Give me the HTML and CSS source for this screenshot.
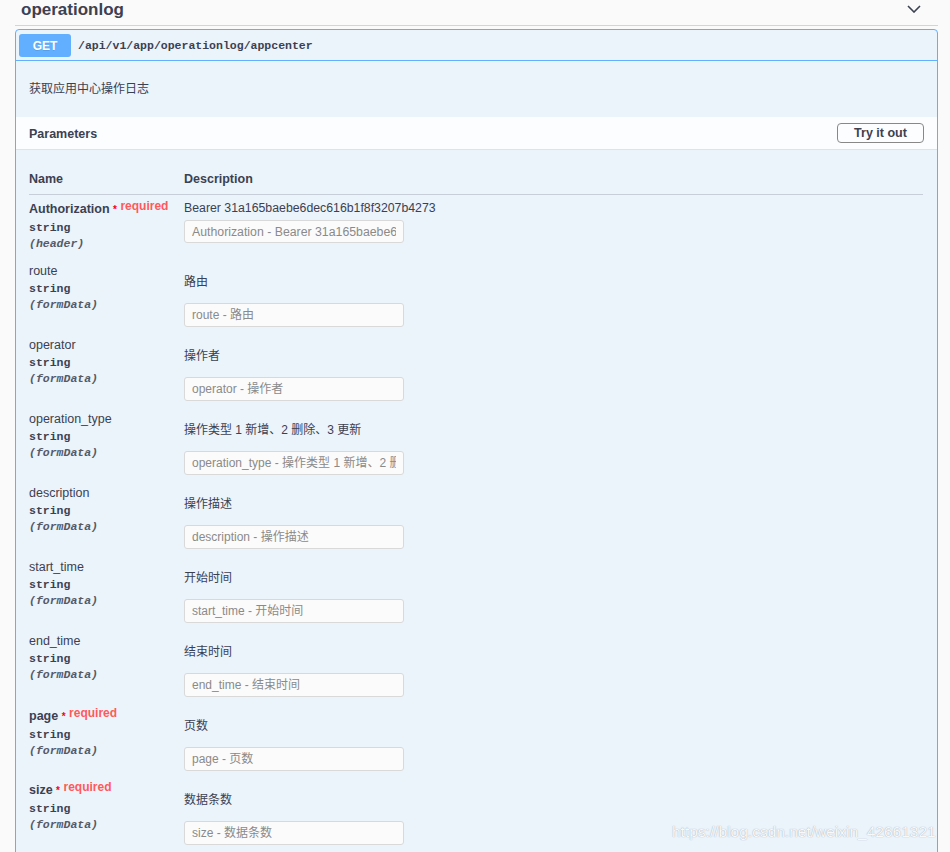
FILE: index.html
```html
<!DOCTYPE html>
<html lang="zh-CN">
<head>
<meta charset="utf-8">
<title>operationlog</title>
<link rel="stylesheet" href="styles.css">
</head>
<body>
<div class="page">
  <div class="tag-header">
    <h4 class="tag-title">operationlog</h4>
    <svg class="chevron" width="14" height="8" viewBox="0 0 14 8"><polyline points="1,1 7,7 13,1" fill="none" stroke="#3b4151" stroke-width="1.6"/></svg>
  </div>

  <div class="opblock">
    <div class="summary">
      <span class="method">GET</span>
      <span class="path">/api/v1/app/operationlog/appcenter</span>
    </div>
    <p class="op-desc">获取应用中心操作日志</p>

    <div class="section-header">
      <h4 class="section-title">Parameters</h4>
      <button class="try-btn" type="button">Try it out</button>
    </div>

    <div class="params">
      <div class="thead">
        <div>Name</div>
        <div>Description</div>
      </div>

      <div class="row auth">
        <div class="name-col">
          <div class="pname req">Authorization <span class="star">*</span> <span class="req-label">required</span></div>
          <div class="ptype">string</div>
          <div class="pin">(header)</div>
        </div>
        <div class="desc-col">
          <p class="pdesc">Bearer 31a165baebe6dec616b1f8f3207b4273</p>
          <input class="input" type="text" placeholder="Authorization - Bearer 31a165baebe6dec616b1f8f3207b4273">
        </div>
      </div>

      <div class="row">
        <div class="name-col">
          <div class="pname">route</div>
          <div class="ptype">string</div>
          <div class="pin">(formData)</div>
        </div>
        <div class="desc-col">
          <p class="pdesc">路由</p>
          <input class="input" type="text" placeholder="route - 路由">
        </div>
      </div>

      <div class="row">
        <div class="name-col">
          <div class="pname">operator</div>
          <div class="ptype">string</div>
          <div class="pin">(formData)</div>
        </div>
        <div class="desc-col">
          <p class="pdesc">操作者</p>
          <input class="input" type="text" placeholder="operator - 操作者">
        </div>
      </div>

      <div class="row">
        <div class="name-col">
          <div class="pname">operation_type</div>
          <div class="ptype">string</div>
          <div class="pin">(formData)</div>
        </div>
        <div class="desc-col">
          <p class="pdesc">操作类型 1 新增、2 删除、3 更新</p>
          <input class="input" type="text" placeholder="operation_type - 操作类型 1 新增、2 删除、3 更新">
        </div>
      </div>

      <div class="row">
        <div class="name-col">
          <div class="pname">description</div>
          <div class="ptype">string</div>
          <div class="pin">(formData)</div>
        </div>
        <div class="desc-col">
          <p class="pdesc">操作描述</p>
          <input class="input" type="text" placeholder="description - 操作描述">
        </div>
      </div>

      <div class="row">
        <div class="name-col">
          <div class="pname">start_time</div>
          <div class="ptype">string</div>
          <div class="pin">(formData)</div>
        </div>
        <div class="desc-col">
          <p class="pdesc">开始时间</p>
          <input class="input" type="text" placeholder="start_time - 开始时间">
        </div>
      </div>

      <div class="row">
        <div class="name-col">
          <div class="pname">end_time</div>
          <div class="ptype">string</div>
          <div class="pin">(formData)</div>
        </div>
        <div class="desc-col">
          <p class="pdesc">结束时间</p>
          <input class="input" type="text" placeholder="end_time - 结束时间">
        </div>
      </div>

      <div class="row">
        <div class="name-col">
          <div class="pname req">page <span class="star">*</span> <span class="req-label">required</span></div>
          <div class="ptype">string</div>
          <div class="pin">(formData)</div>
        </div>
        <div class="desc-col">
          <p class="pdesc">页数</p>
          <input class="input" type="text" placeholder="page - 页数">
        </div>
      </div>

      <div class="row">
        <div class="name-col">
          <div class="pname req">size <span class="star">*</span> <span class="req-label">required</span></div>
          <div class="ptype">string</div>
          <div class="pin">(formData)</div>
        </div>
        <div class="desc-col">
          <p class="pdesc">数据条数</p>
          <input class="input" type="text" placeholder="size - 数据条数">
        </div>
      </div>
    </div>
  </div>
</div>
<div class="watermark">https://blog.csdn.net/weixin_42661321</div>
</body>
</html>
```

FILE: styles.css
```css
html, body {
  margin: 0;
  padding: 0;
}

body {
  background: #fafafa;
  color: #3b4151;
  font-family: "Liberation Sans", "Noto Sans CJK SC", sans-serif;
  font-size: 12.3px;
  position: relative;
}

.page {
  margin-left: 15px;
  width: 923px;
  padding-bottom: 40px;
}

.tag-header {
  display: flex;
  justify-content: space-between;
  align-items: flex-start;
  height: 25px;
  border-bottom: 1px solid #d4d4d4;
}

.tag-title {
  margin: 0;
  padding-left: 6px;
  font-size: 17px;
  line-height: 19px;
  font-weight: bold;
  color: #3b4151;
}

.chevron {
  margin-top: 5px;
  margin-right: 17px;
}

.opblock {
  margin-top: 3px;
  border: 1px solid #61affe;
  border-radius: 4px;
  background: #ebf3fb;
}

.summary {
  display: flex;
  align-items: center;
  padding: 4px 3px 3px;
  border-bottom: 1px solid #61affe;
}

.method {
  width: 52px;
  height: 23px;
  display: flex;
  align-items: center;
  justify-content: center;
  background: #61affe;
  color: #fff;
  border-radius: 3px;
  font-weight: bold;
  font-size: 12px;
  text-shadow: 0 1px 0 rgba(0, 0, 0, 0.1);
}

.path {
  margin-left: 7px;
  font-family: "Liberation Mono", monospace;
  font-weight: bold;
  font-size: 11.5px;
  color: #3b4151;
}

.op-desc {
  margin: 0;
  padding: 20px 13px 20px;
  line-height: 16px;
  font-size: 12px;
}

.section-header {
  display: flex;
  justify-content: space-between;
  align-items: center;
  padding: 6px 13px;
  background: rgba(255, 255, 255, 0.82);
  border-bottom: 1px solid #dde3ea;
}

.section-title {
  margin: 0;
  font-size: 12.5px;
  line-height: 18px;
  padding-top: 1px;
  font-weight: bold;
}

.try-btn {
  width: 87px;
  height: 20px;
  padding: 0;
  border: 1px solid #888;
  border-radius: 4px;
  background: transparent;
  color: #3b4151;
  font-family: "Liberation Sans", sans-serif;
  font-size: 12.5px;
  font-weight: bold;
  line-height: 18px;
}

.params {
  padding: 0 14px 10px 13px;
}

.thead {
  display: grid;
  grid-template-columns: 155px 1fr;
  padding: 21px 0 7px;
  border-bottom: 1px solid #c7ced8;
  font-size: 12.5px;
  font-weight: bold;
  line-height: 16px;
}

.row {
  display: grid;
  grid-template-columns: 155px 1fr;
  padding: 5px 0;
}

.row.auth {
  padding-bottom: 6px;
}

.pname {
  font-size: 12.5px;
  line-height: 16px;
  white-space: nowrap;
}

.pname.req {
  font-weight: bold;
  line-height: 17px;
}

.star {
  color: #f00;
  font-size: 10px;
}

.req-label {
  color: #ff5a5a;
  font-size: 12px;
  font-weight: bold;
  line-height: 12px;
  vertical-align: 3px;
}

.ptype {
  margin-top: 2px;
  font-family: "Liberation Mono", monospace;
  font-weight: bold;
  font-size: 11.5px;
  line-height: 16px;
}

.pin {
  font-family: "Liberation Mono", monospace;
  font-style: italic;
  font-weight: bold;
  font-size: 11.5px;
  line-height: 16px;
  color: #555a66;
}

.pdesc {
  margin: 11px 0 13px;
  line-height: 16px;
  font-size: 12px;
}

.auth .pdesc {
  margin: 0 0 4px;
  font-size: 12.3px;
}

.input {
  display: block;
  box-sizing: border-box;
  width: 220px;
  height: 24px;
  margin: 0;
  padding: 0 7px;
  border: 1px solid #d9d9d9;
  border-radius: 3px;
  background: #fbfbfb;
  color: #3b4151;
  font-family: "Liberation Sans", "Noto Sans CJK SC", sans-serif;
  font-size: 12px;
  line-height: 22px;
  outline: none;
}

.input::placeholder {
  color: #8a8a8a;
  opacity: 1;
}

.auth .input {
  height: 23px;
  line-height: 21px;
  font-size: 12.3px;
}

.watermark {
  position: absolute;
  left: 672px;
  top: 823px;
  font-family: "Liberation Sans", sans-serif;
  font-size: 15.5px;
  line-height: 18px;
  color: rgba(255, 255, 255, 0.95);
  text-shadow: 0 0 1px rgba(100, 110, 125, 0.7);
  white-space: nowrap;
}
```
